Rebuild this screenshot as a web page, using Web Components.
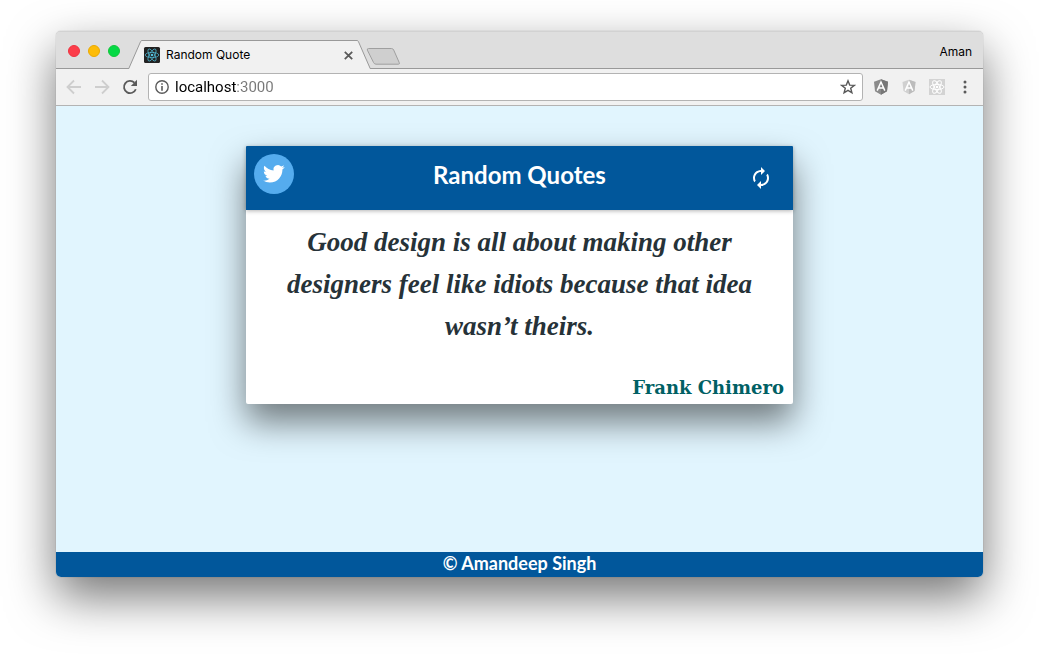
<!DOCTYPE html>
<html lang="en">
<head>
<meta charset="utf-8">
<meta name="viewport" content="width=device-width, initial-scale=1">
<title>Random Quote</title>
<style>
  body { margin: 0; background: #fff; font-family: Inter, "Liberation Sans", sans-serif; }
</style>
</head>
<body>
<browser-window>
  <tab-strip slot="tabs" user="Aman">Random Quote</tab-strip>
  <address-bar slot="toolbar" url="localhost:3000"></address-bar>
  <quote-app></quote-app>
</browser-window>

<script>
const define = (name, html, setup) => {
  const template = document.createElement('template');
  template.innerHTML = html;
  customElements.define(name, class extends HTMLElement {
    constructor() {
      super();
      this.attachShadow({ mode: 'open' }).append(template.content.cloneNode(true));
    }
    connectedCallback() { if (setup) setup(this, this.shadowRoot); }
  });
};

define('browser-window', `
<style>
  :host { display: flex; box-sizing: border-box; min-height: 100vh; padding: 31px 56px 80px; }
  .window { flex: 1; min-width: 0; display: flex; flex-direction: column; border-radius: 5px; overflow: hidden;
    background: #f1f1f1; box-shadow: 0 0 1px rgba(0,0,0,.45), 0 20px 48px rgba(0,0,0,.54); }
  main { flex: 1; display: flex; }
</style>
<div class="window">
  <slot name="tabs"></slot>
  <slot name="toolbar"></slot>
  <main><slot></slot></main>
</div>`);

define('tab-strip', `
<style>
  :host { display: flex; height: 38px; padding-left: 12px; background: #dedede;
    box-shadow: inset 0 -1px #999, inset 0 1px #d2d2d2; font-size: 12px; color: #000; }
  .lights { display: flex; gap: 8px; align-items: center; padding-top: 2px; }
  .lights button { width: 12px; height: 12px; padding: 0; border: 1px solid #ee3341; border-radius: 50%; background: #fc3d4a; }
  .lights .min { border-color: #eba900; background: #fdbc08; }
  .lights .max { border-color: #12c63b; background: #05d945; }
  .tab { display: flex; align-self: flex-end; height: 29px; width: 243px; margin-left: 8px; }
  .tab > svg { flex: none; display: block; }
  .body { flex: 1; display: flex; align-items: center; box-sizing: border-box; border-top: 1px solid #999; background: #f1f1f1; }
  .label { flex: 1; margin-left: 4px; padding-bottom: 2px; }
  .close { display: flex; padding: 4px; border: 0; background: none; }
  .new { align-self: flex-end; display: flex; padding: 0; margin: 0 0 4px -5px; border: 0; background: none; }
  .user { margin-left: auto; padding-right: 11px; align-self: center; line-height: 16px; padding-top: 3px; }
</style>
<div class="lights">
  <button aria-label="Close window"></button><button class="min" aria-label="Minimise"></button><button class="max" aria-label="Zoom"></button>
</div>
<div class="tab">
  <svg width="14" height="29" viewBox="0 0 14 29"><path d="M0 29L1 28.500L13 .5H14V29z" fill="#f1f1f1"/><path d="M0 28.500H.8L12.600 1.500Q13 .5 14 .5" fill="none" stroke="#999"/></svg>
  <div class="body">
    <svg width="20" height="16" viewBox="0 0 20 16" fill="none" stroke="#53c1de">
      <rect x="2" width="16" height="16" rx="1.500" fill="#222" stroke="none"/>
      <g stroke-width=".7"><ellipse cx="10" cy="8" rx="6.800" ry="2.600"/><ellipse cx="10" cy="8" rx="6.800" ry="2.600" transform="rotate(60 10 8)"/><ellipse cx="10" cy="8" rx="6.800" ry="2.600" transform="rotate(120 10 8)"/></g>
      <circle cx="10" cy="8" r="1.300" fill="#53c1de" stroke="none"/>
    </svg>
    <span class="label"><slot></slot></span>
    <button class="close" aria-label="Close tab"><svg width="9" height="9" viewBox="0 0 9 9" stroke="#5a5a5a" stroke-width="1.800"><path d="M.8 .8L8.200 8.200M8.200 .8L.8 8.200"/></svg></button>
  </div>
  <svg width="14" height="29" viewBox="0 0 14 29"><path d="M0 .5H1L13 28.500L14 29H0z" fill="#f1f1f1"/><path d="M0 .5Q1 .5 1.400 1.500L13.200 28.500H14" fill="none" stroke="#999"/></svg>
</div>
<button class="new" aria-label="New tab"><svg width="35" height="17" viewBox="0 0 35 17"><path d="M2.500 .5H25.500Q27 .5 27.700 2L33.200 14.500Q34 16.200 32.500 16.200H10Q8.400 16.200 7.600 14.600L1.400 2.200Q.8 .5 2.500 .5z" fill="#cfcfcf" stroke="#9f9f9f"/></svg></button>
<span class="user"></span>`, (host, root) => {
  root.querySelector('.user').textContent = host.getAttribute('user');
});

define('address-bar', `
<style>
  :host { display: flex; align-items: center; gap: 4px; height: 36px; padding: 0 4px; background: #f1f1f1; border-bottom: 1px solid #b3b3b3; }
  nav { display: flex; }
  nav button { width: 28px; height: 28px; display: grid; place-items: center; padding: 0; border: 0; background: none; }
  .field { flex: 1; display: flex; align-items: center; box-sizing: border-box; height: 28px; padding: 0 6px; border: 1px solid #b3b3b3; border-radius: 3px; background: #fff; }
  .field svg { flex: none; }
  input { flex: 1; min-width: 0; padding: 0; margin: 0 6px 0 6px; border: 0; outline: 0; font: 15px/20px Roboto, "Liberation Sans", sans-serif;
    background: linear-gradient(90deg, #000 61px, #777 61px); -webkit-background-clip: text; background-clip: text; color: transparent; caret-color: #000; }
</style>
<nav>
  <button aria-label="Back"><svg width="16" height="16" viewBox="0 0 16 16" fill="none" stroke="#cecece" stroke-width="1.800"><path d="M15 8H2.500M8 1.500L1.500 8L8 14.500"/></svg></button>
  <button aria-label="Forward"><svg width="16" height="16" viewBox="0 0 16 16" fill="none" stroke="#cecece" stroke-width="1.800"><path d="M1 8H13.500M8 1.500L14.500 8L8 14.500"/></svg></button>
  <button aria-label="Reload"><svg width="16" height="16" viewBox="0 0 16 16"><path d="M13.800 10.200A6.100 6.100 0 1 1 12.400 3.700" fill="none" stroke="#5a5a5a" stroke-width="1.800"/><path d="M15 .8V7H8.800z" fill="#5a5a5a"/></svg></button>
</nav>
<div class="field">
  <svg width="14" height="14" viewBox="0 0 14 14"><circle cx="7" cy="7" r="6.200" fill="none" stroke="#5a5a5a" stroke-width="1.400"/><path d="M6.200 3.200h1.600v1.600H6.200zM6.200 6h1.600v4.800H6.200z" fill="#5a5a5a"/></svg>
  <input type="text" aria-label="Address" spellcheck="false">
  <svg width="16" height="16" viewBox="0 0 16 16" fill="none" stroke="#5a5a5a" stroke-width="1.400"><path d="M8 1.800L9.700 6.100L14.300 6.400L10.700 9.300L11.900 13.800L8 11.300L4.100 13.800L5.300 9.300L1.700 6.400L6.300 6.100z"/></svg>
</div>
<nav>
  <button aria-label="Angular extension"><svg width="16" height="16" viewBox="0 0 16 16"><path d="M8 .3L15 2.800L14 12.300L8 15.700L2 12.300L1 2.800z" fill="#8b8b8b"/><path d="M8 .3L15 2.800L14 12.300L8 15.700z" fill="#777"/><path d="M4.200 11.600L8 3L11.800 11.600M5.600 9H10.400" fill="none" stroke="#fff" stroke-width="1.500"/></svg></button>
  <button aria-label="Angular inspector"><svg width="16" height="16" viewBox="0 0 16 16"><path d="M8 .8L14.500 3L13.500 12L8 15.200L2.500 12L1.500 3z" fill="#d0d0d0"/><path d="M8 .8L14.500 3L13.500 12L8 15.200z" fill="#bcbcbc"/><path d="M4.200 11.600L8 3L11.800 11.600M5.600 9H10.400" fill="none" stroke="#fff" stroke-width="1.500"/></svg></button>
  <button aria-label="React extension"><svg width="16" height="16" viewBox="0 0 16 16" fill="none" stroke="#fff"><rect width="16" height="16" fill="#d3d3d3" stroke="none"/><ellipse cx="8" cy="8" rx="7" ry="2.600"/><ellipse cx="8" cy="8" rx="7" ry="2.600" transform="rotate(60 8 8)"/><ellipse cx="8" cy="8" rx="7" ry="2.600" transform="rotate(120 8 8)"/><circle cx="8" cy="8" r="1.300" fill="#fff" stroke="none"/></svg></button>
  <button aria-label="Menu"><svg width="4" height="14" viewBox="0 0 4 14" fill="#5a5a5a"><circle cx="2" cy="2" r="1.500"/><circle cx="2" cy="7" r="1.500"/><circle cx="2" cy="12" r="1.500"/></svg></button>
</nav>`, (host, root) => {
  root.querySelector('input').value = host.getAttribute('url');
});

define('quote-card', `
<style>
  :host { display: block; width: 59%; background: #fff; border-radius: 2px;
    box-shadow: 0 18px 34px rgba(0,0,0,.5); }
  header { display: grid; grid-template-columns: 48px 1fr 48px; box-sizing: border-box; height: 64px; padding: 8px; background: #01579b; color: #fff;
    box-shadow: 0 1px 4px rgba(0,0,0,.3); border-radius: 1px 1px 0 0; }
  header a { height: 40px; width: 40px; }
  header svg { display: block; }
  h1 { margin: 0; text-align: center; font: bold 24px/42px Lato, "Noto Sans", sans-serif; }
  button { display: grid; place-items: center; padding: 0; border: 0; background: none; color: #fff; }
  blockquote { margin: 0; padding: 11px 24px 0; text-align: center; color: #263238; font: italic bold 27px/42px "Liberation Serif", serif; }
  footer { padding: 29px 9px 4px; text-align: right; color: #006064; font: bold 18px/24px "DejaVu Serif", serif; }
</style>
<header>
  <a href="#tweet" aria-label="Share on Twitter"><svg width="40" height="40" viewBox="0 0 40 40"><circle cx="20" cy="20" r="20" fill="#55acee"/><path transform="translate(9 9) scale(.9)" fill="#fff" d="M23.950 4.570a10 10 0 0 1-2.820.770 4.960 4.960 0 0 0 2.160-2.720c-.950.550-2 .950-3.130 1.180a4.920 4.920 0 0 0-8.380 4.480C7.690 8.090 4.070 6.130 1.640 3.160a4.820 4.820 0 0 0-.670 2.480c0 1.710.870 3.210 2.190 4.100a4.900 4.900 0 0 1-2.230-.620v.060a4.920 4.920 0 0 0 3.950 4.830 5 5 0 0 1-2.210.080 4.940 4.940 0 0 0 4.600 3.420A9.870 9.870 0 0 1 0 19.540a13.990 13.990 0 0 0 7.560 2.210c9.050 0 14-7.500 14-13.980 0-.210 0-.420-.020-.630a9.940 9.940 0 0 0 2.460-2.550z"/></svg></a>
  <h1><slot name="title"></slot></h1>
  <button aria-label="New quote"><svg width="24" height="24" viewBox="0 0 24 24" fill="currentColor"><path d="M12 6v3l4-4-4-4v3c-4.420 0-8 3.580-8 8 0 1.570.46 3.030 1.240 4.260L6.700 14.800c-.45-.83-.7-1.790-.7-2.800 0-3.310 2.690-6 6-6zm6.760 1.740L17.300 9.200c.44.84.7 1.790.7 2.800 0 3.310-2.690 6-6 6v-3l-4 4 4 4v-3c4.420 0 8-3.580 8-8 0-1.570-.46-3.030-1.240-4.260z"/></svg></button>
</header>
<blockquote><slot></slot></blockquote>
<footer><slot name="author"></slot></footer>`);

define('quote-app', `
<style>
  :host { flex: 1; display: flex; flex-direction: column; background: #e1f5fe; }
  section { flex: 1; display: flex; justify-content: center; align-items: flex-start; padding: 40px 0; }
  footer { height: 25px; text-align: center; background: #01579b; color: #fff; font: bold 18px/22px Lato, "Noto Sans", sans-serif; }
</style>
<section>
  <quote-card>
    <span slot="title">Random Quotes</span>
    Good design is all about making other designers feel like idiots because that idea wasn’t theirs.
    <span slot="author">Frank Chimero</span>
  </quote-card>
</section>
<footer>© Amandeep Singh</footer>`);
</script>
</body>
</html>
